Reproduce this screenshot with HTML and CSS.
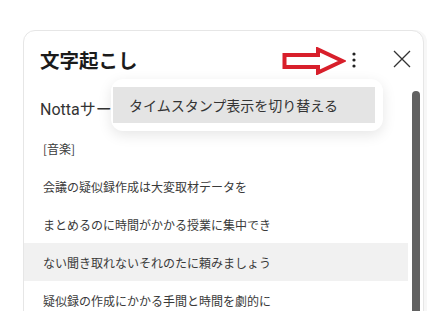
FILE: index.html
```html
<!DOCTYPE html>
<html lang="ja">
<head>
<meta charset="utf-8">
<link rel="stylesheet" href="styles.css">
</head>
<body>
<div class="panel">
  <div class="header">
    <h1 class="title">文字起こし</h1>
    <div class="actions">
      <svg class="arrow" width="64" height="28" viewBox="0 0 64 28">
        <path d="M2.5 8 H36 V2.5 L60.5 14 L36 25.5 V20 H2.5 Z" fill="#fff" stroke="#d81f2b" stroke-width="4" stroke-linejoin="miter"/>
      </svg>
      <svg class="dots" width="6" height="18" viewBox="0 0 6 18">
        <circle cx="3" cy="3" r="1.6" fill="#222"/>
        <circle cx="3" cy="9" r="1.6" fill="#222"/>
        <circle cx="3" cy="15" r="1.6" fill="#222"/>
      </svg>
      <svg class="close" width="18" height="18" viewBox="0 0 18 18">
        <path d="M1 1 L17 17 M17 1 L1 17" stroke="#333" stroke-width="1.3" fill="none"/>
      </svg>
    </div>
  </div>
  <div class="content">
    <div class="lines">
      <div class="line lead">Nottaサービスへようこそ</div>
      <div class="line">[音楽]</div>
      <div class="line">会議の疑似録作成は大変取材データを</div>
      <div class="line">まとめるのに時間がかかる授業に集中でき</div>
      <div class="line active">ない聞き取れないそれのたに頼みましょう</div>
      <div class="line">疑似録の作成にかかる手間と時間を劇的に</div>
    </div>
    <div class="track"><div class="thumb"></div></div>
  </div>
  <div class="menu">
    <div class="menu-item">タイムスタンプ表示を切り替える</div>
  </div>
</div>
</body>
</html>
```

FILE: styles.css
```css
html, body {
  margin: 0;
  padding: 0;
  background: #fff;
  overflow: hidden;
}
body {
  font-family: "Noto Sans CJK JP", "Noto Sans", sans-serif;
  color: #333;
  padding: 30px 0 0 23px;
}
.panel {
  position: relative;
  width: 399px;
  height: 320px;
  border: 1px solid #e6e6e6;
  border-radius: 12px;
  box-shadow: 3px 0 0 #f7f7f7;
  background: #fff;
}
.header {
  height: 56px;
  display: flex;
  align-items: center;
  justify-content: space-between;
  padding: 0 12px 0 16px;
}
.title {
  margin: 0;
  font-size: 19.5px;
  font-weight: 700;
  color: #1b1b1b;
  letter-spacing: 0;
}
.actions {
  display: flex;
  align-items: center;
}
.arrow {
  display: block;
  margin-top: 3px;
}
.dots {
  display: block;
  margin-left: 5px;
  margin-top: 2px;
}
.close {
  display: block;
  margin-left: 36px;
}
.content {
  display: flex;
  gap: 4px;
  padding-right: 3px;
}
.lines {
  flex: 1;
}
.line {
  height: 38px;
  display: flex;
  align-items: center;
  padding-left: 19px;
  font-size: 12px;
  color: #3a3a3a;
  white-space: nowrap;
  overflow: hidden;
}
.line.lead {
  height: 42px;
  padding-left: 16px;
  font-family: Roboto, "Noto Sans CJK JP", sans-serif;
  font-size: 16px;
  color: #333;
}
.line.active {
  background: #f1f1f1;
}
.track {
  width: 8px;
  padding-top: 4px;
}
.thumb {
  width: 8px;
  height: 260px;
  background: #616161;
  border-radius: 4px 4px 0 0;
}
.menu {
  position: absolute;
  left: 87px;
  top: 48px;
  width: 272px;
  padding: 8px 8px 8px 2px;
  box-sizing: border-box;
  background: #fff;
  border-radius: 12px;
  box-shadow: 0 4px 14px rgba(0, 0, 0, 0.10);
}
.menu-item {
  height: 36px;
  display: flex;
  align-items: center;
  padding-left: 16px;
  background: #e4e4e4;
  font-size: 14px;
  color: #333;
  white-space: nowrap;
}
```
